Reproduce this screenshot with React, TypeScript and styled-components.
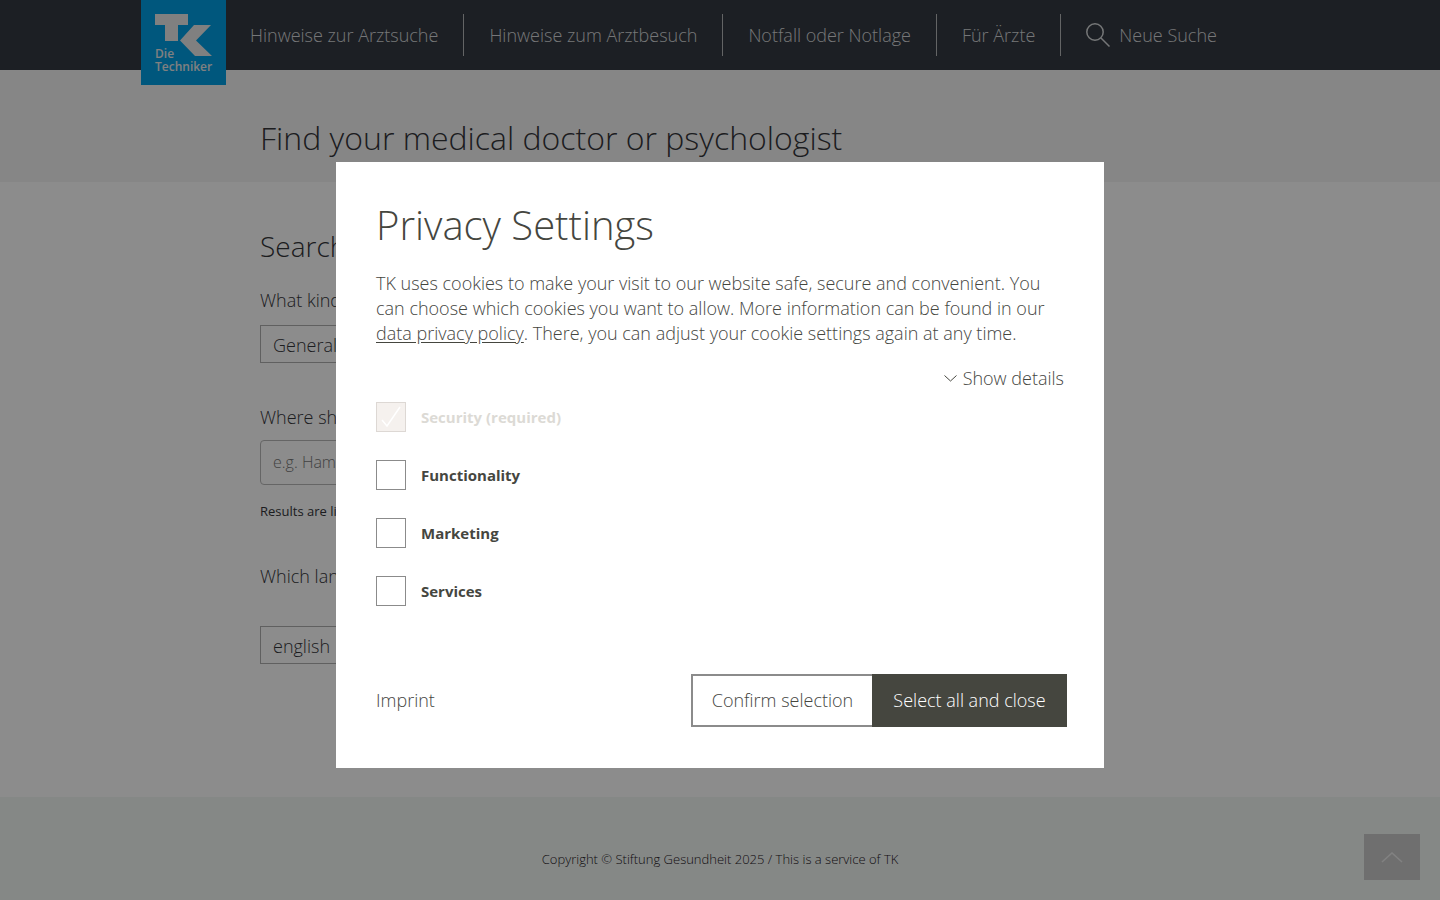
import React from 'react';
import styled, { createGlobalStyle } from 'styled-components';

const GlobalStyle = createGlobalStyle`
  *, *::before, *::after { box-sizing: border-box; }
  body {
    margin: 0;
    background: #ffffff;
    color: #45463f;
    font-family: 'Open Sans', 'Noto Sans', sans-serif;
    font-size: 18px;
    font-weight: 300;
    line-height: 25px;
  }
  button, input, select { font: inherit; color: inherit; }
  h1, h2, p { margin: 0; font-weight: 300; }
`;

const Page = styled.div`
  display: flex;
  flex-direction: column;
  min-height: 100vh;
  color: #34353a;
`;

const TopBar = styled.header`
  position: relative;
  z-index: 1;
  height: 70px;
  background: #343a42;
`;

const TopBarInner = styled.div`
  display: flex;
  align-items: flex-start;
  max-width: 1158px;
  margin: 0 auto;
`;

const LogoLink = styled.a`
  display: block;
  flex: none;
  width: 85px;
  height: 85px;
  background: #009fe3;
`;

const Nav = styled.nav`
  display: flex;
  padding-top: 14px;
`;

const NavLink = styled.a`
  display: flex;
  align-items: center;
  gap: 9px;
  height: 42px;
  padding: 0 25px;
  border-right: 1px solid #b4b6b9;
  color: #d6d8da;
  text-decoration: none;
  white-space: nowrap;

  &:first-child { padding-left: 24px; }
  &:last-child { border-right: 0; }
`;

const Hero = styled.section`
  padding: 48px 0 24px;
  background: #f4f4f4;
`;

const Container = styled.div`
  max-width: 920px;
  margin: 0 auto;
`;

const HeroTitle = styled.h1`
  font-size: 32px;
  line-height: 40px;
`;

const Main = styled.main`
  flex: 1;
  padding: 44px 0 48px;
`;

const SearchTitle = styled.h2`
  margin-bottom: 22px;
  font-size: 28px;
  line-height: 40px;
`;

const Field = styled.div<{ $gap: number; $before?: number; $after?: number }>`
  display: flex;
  flex-direction: column;
  align-items: flex-start;
  gap: ${(p) => p.$gap}px;
  margin-top: ${(p) => p.$before ?? 0}px;
  margin-bottom: ${(p) => p.$after ?? 0}px;
`;

const FieldSelect = styled.select`
  width: 440px;
  max-width: 100%;
  height: 38px;
  padding: 2px 12px 0;
  border: 1px solid #b0b0b0;
  border-radius: 0;
  background: transparent;
  appearance: none;
`;

const FieldInput = styled.input`
  width: 440px;
  max-width: 100%;
  height: 45px;
  padding: 0 12px 2px;
  border: 1px solid #b8b8b8;
  border-radius: 4px;
  background: transparent;
  font-size: 16px;

  &::placeholder { color: #777777; opacity: 1; }
`;

const Hint = styled.p`
  font-size: 13px;
  font-weight: 400;
  line-height: 20px;
`;

const Footer = styled.footer`
  padding: 52px 0 30px;
  background: #f3f7f5;
  color: #1f201d;
  font-size: 13px;
  line-height: 21px;
  text-align: center;
`;

const ToTop = styled.button`
  position: fixed;
  right: 20px;
  bottom: 20px;
  display: flex;
  align-items: center;
  justify-content: center;
  width: 56px;
  height: 46px;
  padding: 0;
  border: 0;
  background: #cbcbcb;
  color: #ececec;
`;

const Overlay = styled.div`
  position: fixed;
  inset: 0;
  z-index: 2;
  display: flex;
  align-items: center;
  justify-content: center;
  padding-top: 30px;
  background: rgba(0, 0, 0, 0.45);
`;

const Dialog = styled.section`
  width: 768px;
  max-width: 100%;
  padding: 40px 40px 41px;
  background: #ffffff;
`;

const DialogTitle = styled.h2`
  margin-bottom: 23px;
  font-size: 40px;
  line-height: 46px;
`;

const PolicyLink = styled.a`
  color: inherit;
  text-decoration: underline;
  text-underline-offset: 2px;
`;

const DetailsRow = styled.div`
  display: flex;
  justify-content: flex-end;
  margin: 20px 0 11px;
`;

const DetailsButton = styled.button`
  display: flex;
  align-items: center;
  gap: 6px;
  padding: 0;
  border: 0;
  background: none;
`;

const Options = styled.div`
  display: flex;
  flex-direction: column;
  align-items: flex-start;
  gap: 28px;
`;

const Option = styled.label<{ $disabled?: boolean }>`
  display: flex;
  align-items: center;
  gap: 15px;
  height: 30px;
  color: ${(p) => (p.$disabled ? '#dcdad5' : '#45463f')};
  font-size: 15px;
  font-weight: 700;
`;

const Check = styled.span`
  display: grid;
  width: 30px;
  height: 30px;

  > * { grid-area: 1 / 1; }
  > svg { pointer-events: none; }
`;

const CheckBox = styled.input`
  width: 30px;
  height: 30px;
  margin: 0;
  border: 1px solid #8b8b8b;
  background: #ffffff;
  appearance: none;

  &:disabled {
    border-color: #ddd8d4;
    background: #f5f1ee;
  }
`;

const DialogFooter = styled.div`
  display: flex;
  align-items: center;
  justify-content: space-between;
  margin: 68px -3px 0 0;
`;

const ImprintLink = styled.a`
  color: inherit;
  text-decoration: none;
`;

const Actions = styled.div`
  display: flex;
`;

const ActionButton = styled.button<{ $primary?: boolean }>`
  width: ${(p) => (p.$primary ? 195 : 181)}px;
  height: 53px;
  padding: 0;
  border: 2px solid ${(p) => (p.$primary ? '#45463f' : '#8b8b8b')};
  ${(p) => (p.$primary ? '' : 'border-right: 0;')}
  background: ${(p) => (p.$primary ? '#45463f' : '#ffffff')};
  color: ${(p) => (p.$primary ? '#ffffff' : '#45463f')};
  white-space: nowrap;
`;

const LogoText = styled.text`
  font-family: 'Open Sans', sans-serif;
  font-size: 12px;
  font-weight: 600;
`;

function Logo() {
  return (
    <svg width="85" height="85" viewBox="0 0 85 85" fill="#e9e9ea" role="img" aria-label="Die Techniker">
      <path d="M14 14h33v11H37v16H24V25H14z" />
      <path d="M53 25h17L55 40.500 71 56H54L39 40.500z" />
      <LogoText x="14" y="58">Die</LogoText>
      <LogoText x="14" y="71">Techniker</LogoText>
    </svg>
  );
}

function SearchIcon() {
  return (
    <svg width="24" height="24" viewBox="0 0 24 24" fill="none" stroke="currentColor" strokeWidth="1.500">
      <circle cx="9" cy="9" r="8.200" />
      <path d="M15 15l8.500 8.500" />
    </svg>
  );
}

const navItems = ['Hinweise zur Arztsuche', 'Hinweise zum Arztbesuch', 'Notfall oder Notlage', 'Für Ärzte'];

const cookieOptions = [
  { id: 'security', label: 'Security (required)', required: true },
  { id: 'functionality', label: 'Functionality', required: false },
  { id: 'marketing', label: 'Marketing', required: false },
  { id: 'services', label: 'Services', required: false },
];

export default function App() {
  return (
    <>
      <GlobalStyle />
      <Page>
        <TopBar>
          <TopBarInner>
            <LogoLink href="#"><Logo /></LogoLink>
            <Nav>
              {navItems.map((item) => (
                <NavLink href="#" key={item}>{item}</NavLink>
              ))}
              <NavLink href="#"><SearchIcon />Neue Suche</NavLink>
            </Nav>
          </TopBarInner>
        </TopBar>
        <Hero>
          <Container>
            <HeroTitle>Find your medical doctor or psychologist</HeroTitle>
          </Container>
        </Hero>
        <Main>
          <Container>
            <SearchTitle>Search</SearchTitle>
            <Field $gap={12} $after={42}>
              <label htmlFor="kind">What kind</label>
              <FieldSelect id="kind"><option>General</option></FieldSelect>
            </Field>
            <Field $gap={10} $after={16}>
              <label htmlFor="where">Where sh</label>
              <FieldInput id="where" type="text" placeholder="e.g. Ham" />
            </Field>
            <Hint>Results are lis</Hint>
            <Field $gap={37} $before={43}>
              <label htmlFor="language">Which lan</label>
              <FieldSelect id="language"><option>english</option></FieldSelect>
            </Field>
          </Container>
        </Main>
        <Footer>Copyright © Stiftung Gesundheit 2025 / This is a service of TK</Footer>
      </Page>
      <ToTop type="button" aria-label="To top">
        <svg width="22" height="11" viewBox="0 0 22 11" fill="none" stroke="currentColor" strokeWidth="1.500">
          <path d="M1 10L11 1l10 9" />
        </svg>
      </ToTop>
      <Overlay>
        <Dialog role="dialog" aria-modal="true" aria-labelledby="privacy-title">
          <DialogTitle id="privacy-title">Privacy Settings</DialogTitle>
          <p>
            TK uses cookies to make your visit to our website safe, secure and convenient. You
            can choose which cookies you want to allow. More information can be found in our{' '}
            <PolicyLink href="#">data privacy policy</PolicyLink>. There, you can adjust your cookie settings again at any time.
          </p>
          <DetailsRow>
            <DetailsButton type="button">
              <svg width="13" height="7" viewBox="0 0 13 7" fill="none" stroke="currentColor">
                <path d="M0.500 0.500l6 5.500 6-5.500" />
              </svg>
              Show details
            </DetailsButton>
          </DetailsRow>
          <Options>
            {cookieOptions.map((o) => (
              <Option key={o.id} $disabled={o.required}>
                <Check>
                  <CheckBox type="checkbox" defaultChecked={o.required} disabled={o.required} />
                  {o.required && (
                    <svg width="30" height="30" viewBox="0 0 30 30" fill="none" stroke="#ffffff" strokeWidth="1.500">
                      <path d="M6 18l5 6L24 5" />
                    </svg>
                  )}
                </Check>
                {o.label}
              </Option>
            ))}
          </Options>
          <DialogFooter>
            <ImprintLink href="#">Imprint</ImprintLink>
            <Actions>
              <ActionButton type="button">Confirm selection</ActionButton>
              <ActionButton type="button" $primary>Select all and close</ActionButton>
            </Actions>
          </DialogFooter>
        </Dialog>
      </Overlay>
    </>
  );
}
